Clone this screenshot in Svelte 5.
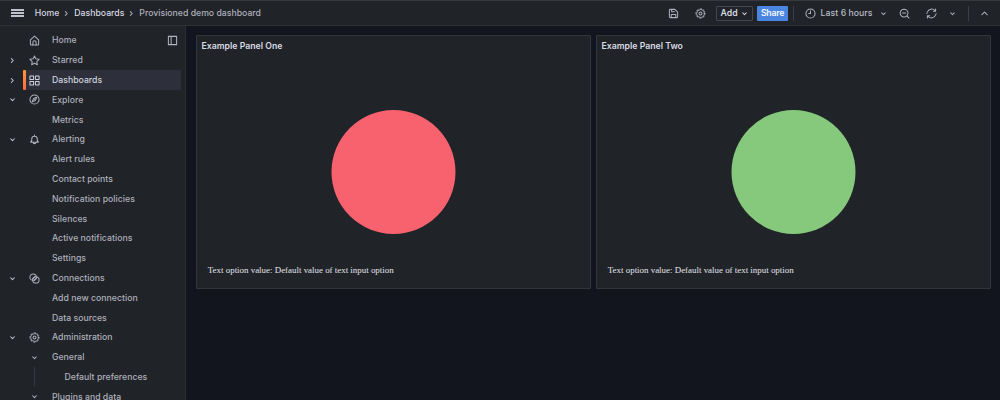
<script>
  const nav = [
    { label: 'Home', icon: 'home', dock: true },
    { label: 'Starred', icon: 'star', arrow: 'right' },
    { label: 'Dashboards', icon: 'apps', arrow: 'right', active: true },
    { label: 'Explore', icon: 'compass', arrow: 'down' },
    { label: 'Metrics' },
    { label: 'Alerting', icon: 'bell', arrow: 'down' },
    { label: 'Alert rules' },
    { label: 'Contact points' },
    { label: 'Notification policies' },
    { label: 'Silences' },
    { label: 'Active notifications' },
    { label: 'Settings' },
    { label: 'Connections', icon: 'link', arrow: 'down' },
    { label: 'Add new connection' },
    { label: 'Data sources' },
    { label: 'Administration', icon: 'cog', arrow: 'down' },
    { label: 'General', sub: true },
    { label: 'Default preferences', deep: true },
    { label: 'Plugins and data', sub: true }
  ];
  const panels = [
    { title: 'Example Panel One', color: '#f8626f' },
    { title: 'Example Panel Two', color: '#86c97c' }
  ];
</script>

{#snippet icon(name, size = 10)}
  <svg class="icon" width={size} height={size} viewBox="0 0 24 24" fill="none" stroke="currentColor" stroke-width={['right', 'down', 'up'].includes(name) ? 2.8 : 2.2} stroke-linecap="round" stroke-linejoin="round">
    {#if name === 'home'}
      <path d="M3 10.5 12 2.5l9 8V20a2 2 0 0 1-2 2H5a2 2 0 0 1-2-2z" /><path d="M8.5 22v-6a3.5 3.5 0 0 1 7 0v6" />
    {:else if name === 'star'}
      <path d="m12 2 3 6.400 7 1-5 5 1.200 7L12 18l-6.200 3.400 1.200-7-5-5 7-1z" />
    {:else if name === 'apps'}
      <rect x="2" y="2" width="8" height="8" rx=".7" /><rect x="14" y="2" width="8" height="8" rx=".7" /><rect x="2" y="14" width="8" height="8" rx=".7" /><rect x="14" y="14" width="8" height="8" rx=".7" />
    {:else if name === 'compass'}
      <circle cx="12" cy="12" r="10" /><path d="m17 7-3 7-7 3 3-7z" /><path d="M12 12h.01" />
    {:else if name === 'bell'}
      <path d="M12 2v3M6 17v-6a6 6 0 0 1 12 0v6M6 14l-2 2v2h16v-2l-2-2M9 18a3 3 0 0 0 6 0" />
    {:else if name === 'link'}
      <circle cx="9" cy="9" r="7" /><circle cx="15" cy="15" r="7" /><path d="m8 13 5-5M11 16l5-5" />
    {:else if name === 'cog'}
      <circle cx="12" cy="12" r="8.500" stroke-width="2" />
      <circle cx="12" cy="12" r="10.100" stroke-width="2" stroke-linecap="butt" pathLength="80" stroke-dasharray="6 4" stroke-dashoffset="3" />
      <circle cx="12" cy="12" r="3.200" />
    {:else if name === 'save'}
      <path d="M3 5a2 2 0 0 1 2-2h10l6 6v10a2 2 0 0 1-2 2H5a2 2 0 0 1-2-2zM8 3v5h6M7 21v-7h10v7" />
    {:else if name === 'clock'}
      <circle cx="12" cy="12" r="10" /><path d="M12 6v6H8" />
    {:else if name === 'zoomout'}
      <circle cx="11" cy="11" r="8.500" /><path d="M7.500 11h7M17.500 17.500 22 22" />
    {:else if name === 'sync'}
      <path d="M3 9a10 10 0 0 1 17-3l1 1M21 2v5h-5M21 15a10 10 0 0 1-17 3l-1-1M3 22v-5h5M2 12v-1M22 12v1" />
    {:else if name === 'dock'}
      <path d="M3 3h18v18H3zM9 3v18" />
    {:else if name === 'right'}
      <path d="m9 7 5 5-5 5" />
    {:else if name === 'down'}
      <path d="m7 10 5 5 5-5" />
    {:else if name === 'up'}
      <path d="m5 15 7-7 7 7" />
    {/if}
  </svg>
{/snippet}

<div class="app">
  <header>
    <div class="burger"><i></i><i></i><i></i></div>
    <nav class="crumbs">
      <b>Home</b><span class="sep">{@render icon('right', 9)}</span><b>Dashboards</b><span class="sep">{@render icon('right', 9)}</span><span>Provisioned demo dashboard</span>
    </nav>
    <div class="tools">
      <span class="save">{@render icon('save', 11)}</span>
      <span class="settings">{@render icon('cog', 11)}</span>
      <button class="add">Add {@render icon('down', 9)}</button>
      <button class="share">Share</button>
      <span class="divider"></span>
      <span class="time">{@render icon('clock', 11)}<b>Last 6 hours</b>{@render icon('down', 9)}</span>
      <span class="zoom">{@render icon('zoomout', 11)}</span>
      <span class="sync">{@render icon('sync', 11)}</span>
      <span class="interval">{@render icon('down', 9)}</span>
      <span class="divider last"></span>
      <span>{@render icon('up', 9)}</span>
    </div>
  </header>
  <div class="body">
    <aside>
      {#each nav as item}
        <div class="row">
          <span class="arrow">{#if item.arrow}{@render icon(item.arrow, 9)}{/if}</span>
          <div class="entry" class:active={item.active} class:deep={item.deep}>
            <span class="glyph">{#if item.icon}{@render icon(item.icon, 11)}{:else if item.sub}<span class="fold">{@render icon('down', 9)}</span>{/if}</span>
            <span class="label">{item.label}</span>
            {#if item.dock}<span class="dock">{@render icon('dock', 11)}</span>{/if}
          </div>
        </div>
      {/each}
    </aside>
    <main>
      {#each panels as panel}
        <section>
          <h2>{panel.title}</h2>
          <svg class="disc" width="124" height="124" viewBox="0 0 124 124"><circle cx="61.500" cy="62" r="62" fill={panel.color} /></svg>
          <p>Text option value: Default value of text input option</p>
        </section>
      {/each}
    </main>
  </div>
</div>

<style>
  .app { width: 1000px; height: 400px; overflow: hidden; display: flex; flex-direction: column; background: #12151d; color: #aeb0bb; font: 500 8.7px/12px Inter, sans-serif; letter-spacing: .02px; box-sizing: border-box; }
  .icon { display: block; flex: none; overflow: visible; }
  header { height: 26px; flex: none; box-sizing: border-box; border-top: 1px solid #37393e; border-bottom: 1px solid #2e3136; background: #202327; display: flex; align-items: center; padding: 0 11px; }
  .burger { width: 13px; display: grid; gap: 1.500px; margin-right: 10.700px; }
  .burger i { height: 1.600px; background: #bfc2cd; }
  b { font-weight: 550; color: #d6d8e2; }
  .crumbs { display: flex; align-items: center; white-space: nowrap; letter-spacing: .01px; }
  .sep { padding: 0 3px; }
  .tools { margin-left: auto; display: flex; align-items: center; white-space: nowrap; letter-spacing: .05px; }
  .save { margin-right: 16px; }
  .settings { margin-right: 10px; }
  button { height: 15px; box-sizing: border-box; border-radius: 1px; font: inherit; letter-spacing: inherit; padding: 0; display: flex; align-items: center; justify-content: center; }
  .add { width: 37px; gap: 2px; border: 1px solid #43464d; background: transparent; color: #d6d8e2; font-weight: 600; margin-right: 4px; }
  .share { width: 31px; border: 0; background: #4a86e0; color: #f4f7ff; font-weight: 600; letter-spacing: -.2px; margin-right: 5px; }
  .divider { width: 1px; height: 15px; background: #3b3e44; margin-right: 11px; }
  .time { display: flex; align-items: center; margin-right: 11px; }
  .time b { margin: 0 6.500px 0 4.500px; color: #b9bbc6; }
  .zoom { margin-right: 16px; }
  .sync { margin-right: 11.300px; }
  .interval { margin-right: 10.700px; }
  .last { margin-right: 11px; }
  .body { display: flex; flex: 1; min-height: 0; }
  aside { width: 186px; flex: none; box-sizing: border-box; background: #202327; border-right: 1px solid #2a2d33; padding-top: 4.600px; overflow: hidden; }
  .row { display: flex; height: 19.800px; align-items: center; }
  .arrow { width: 15.400px; padding-left: 8px; color: #c2c4cf; }
  .entry { width: 158px; height: 100%; box-sizing: border-box; display: flex; align-items: center; position: relative; border-radius: 1px; }
  .glyph { width: 22.800px; padding-left: 5.800px; }
  .fold { display: block; padding-left: 1px; }
  .label { white-space: nowrap; }
  .active { background: #2d303a; color: #d0d2dd; }
  .active::before { content: ''; position: absolute; left: 0; top: 0; bottom: 0; width: 2.700px; border-radius: 1px; background: linear-gradient(#ff9834, #ff6b42); }
  .dock { margin-left: auto; margin-right: 3px; color: #b3b5c0; }
  .deep .label { padding-left: 12.500px; }
  .deep::before { content: ''; position: absolute; left: 11px; top: 0; bottom: 0; width: 1px; background: #34373d; }
  main { flex: 1; display: grid; grid-template-columns: 395px 395px; gap: 5px; padding: 9px 9px 0 10px; }
  section { height: 254px; box-sizing: border-box; background: #202327; border: 1px solid #33363b; border-radius: 1px; display: flex; flex-direction: column; }
  h2 { margin: 4px 0 0 4.500px; font-size: 8.700px; line-height: 12px; font-weight: 600; color: #d8dae5; letter-spacing: .02px; }
  .disc { display: block; margin: 58px auto 0; overflow: visible; }
  p { margin: 30px 0 0 10.800px; font: 8.920px/12px "Liberation Serif", serif; letter-spacing: 0; color: #e2e4ed; }
</style>
